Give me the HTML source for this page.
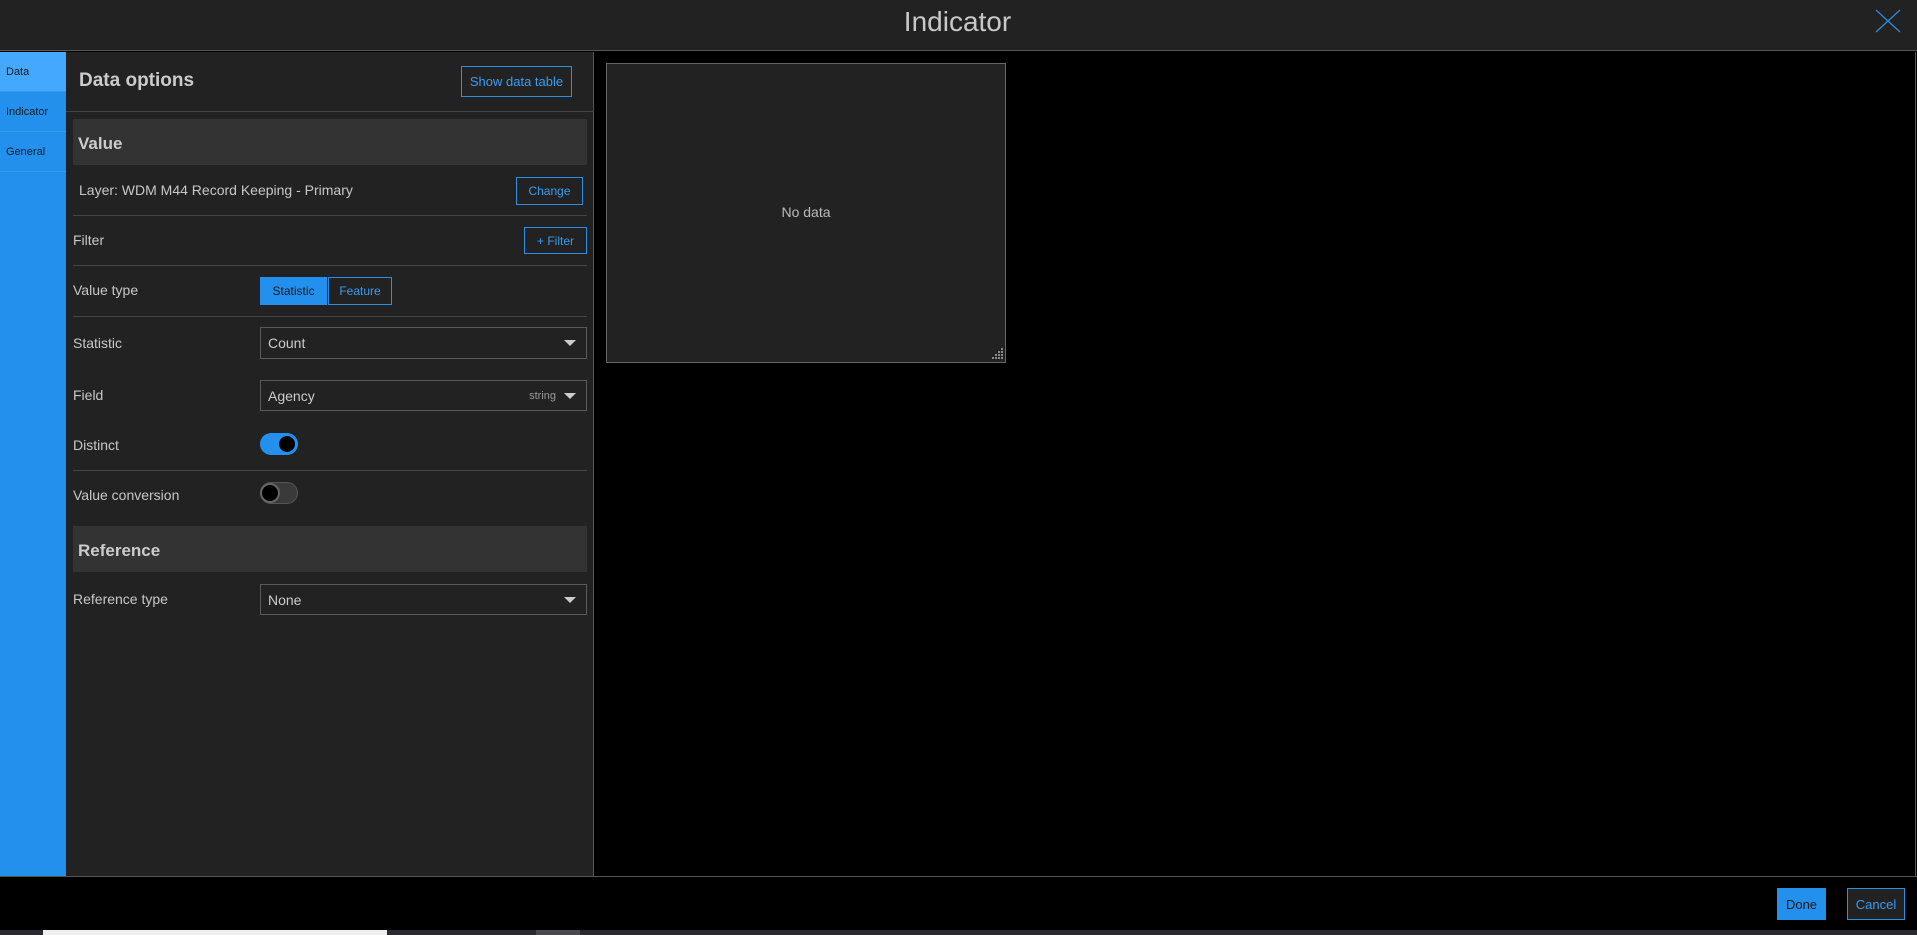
<!DOCTYPE html><html><head><style>
*{box-sizing:border-box;margin:0;padding:0}
body{width:1917px;height:935px;background:#000;font-family:"Liberation Sans",sans-serif;position:relative;overflow:hidden;color:#d0d0d0}
.a{position:absolute}
.lbl{position:absolute;left:73px;font-size:14px;color:#c8c8c8}
.sep{position:absolute;left:73px;width:514px;height:1px;background:#444}
.btn{position:absolute;border:1px solid #2b8fe6;color:#3a9cf0;font-size:12px;display:flex;align-items:center;justify-content:center}
.sel{position:absolute;left:260px;width:327px;border:1px solid #5a5a5a;font-size:14px;color:#ccc;padding-left:7px;display:flex;align-items:center}
.tri{position:absolute;right:10px;top:50%;margin-top:-3px;border-left:6px solid transparent;border-right:6px solid transparent;border-top:6px solid #ccc}
.hd{position:absolute;left:73px;width:514px;height:46px;background:#333;font-size:17px;font-weight:bold;color:#ccc;padding-left:5px;padding-top:3px;display:flex;align-items:center}
</style></head><body>
<div class="a" style="left:0;top:0;width:1917px;height:51px;background:#222;border-bottom:1px solid #555"></div>
<div class="a" style="left:0;top:6px;width:1917px;text-align:center;font-size:28px;color:#c8c8c8;font-weight:300;padding-right:2px">Indicator</div>
<svg class="a" style="left:1875px;top:9px" width="26" height="24"><path d="M1 1L25 23M25 1L1 23" stroke="#2b8fe6" stroke-width="1.2" fill="none"/></svg>
<div class="a" style="left:0;top:52px;width:66px;height:825px;background:#2490ee"></div>
<div class="a" style="left:0;top:52px;width:66px;height:40px;background:#45a8ff;border-bottom:1px solid #3a9ae8"></div>
<div class="a" style="left:0;top:92px;width:66px;height:40px;border-bottom:1px solid #3a9ae8"></div>
<div class="a" style="left:0;top:132px;width:66px;height:40px;border-bottom:1px solid #3a9ae8"></div>
<div class="a" style="left:6px;top:66px;font-size:11px;color:#1a1a1a">Data</div>
<div class="a" style="left:6px;top:106px;font-size:11px;color:#1a1a1a">Indicator</div>
<div class="a" style="left:6px;top:146px;font-size:11px;color:#1a1a1a">General</div>
<div class="a" style="left:66px;top:52px;width:528px;height:825px;background:#222;border-right:1px solid #555"></div>
<div class="a" style="left:79px;top:70px;font-size:19px;font-weight:bold;color:#ccc">Data options</div>
<div class="btn" style="left:461px;top:66px;width:111px;height:31px;font-size:13px">Show data table</div>
<div class="a" style="left:66px;top:111px;width:528px;height:1px;background:#444"></div>
<div class="hd" style="top:119px">Value</div>
<div class="a" style="left:79px;top:182px;font-size:14px;color:#c8c8c8">Layer: WDM M44 Record Keeping - Primary</div>
<div class="btn" style="left:516px;top:177px;width:67px;height:28px">Change</div>
<div class="sep" style="top:215px"></div>
<div class="lbl" style="top:232px">Filter</div>
<div class="btn" style="left:524px;top:227px;width:63px;height:27px">+ Filter</div>
<div class="sep" style="top:265px"></div>
<div class="lbl" style="top:282px">Value type</div>
<div class="a" style="left:260px;top:277px;width:67px;height:28px;background:#2490ee;color:#1a1a1a;font-size:12px;display:flex;align-items:center;justify-content:center">Statistic</div>
<div class="btn" style="left:328px;top:277px;width:64px;height:28px">Feature</div>
<div class="sep" style="top:316px"></div>
<div class="lbl" style="top:335px">Statistic</div>
<div class="sel" style="top:327px;height:32px">Count<div class="tri"></div></div>
<div class="lbl" style="top:387px">Field</div>
<div class="sel" style="top:380px;height:31px">Agency<span style="position:absolute;right:30px;font-size:11px;color:#999">string</span><div class="tri"></div></div>
<div class="lbl" style="top:437px">Distinct</div>
<div class="a" style="left:260px;top:433px;width:38px;height:22px;border-radius:11px;background:#2490ee"></div>
<div class="a" style="left:277px;top:434px;width:20px;height:20px;border-radius:50%;background:#000;border:2px solid #2490ee"></div>
<div class="sep" style="top:470px"></div>
<div class="lbl" style="top:487px">Value conversion</div>
<div class="a" style="left:260px;top:482px;width:38px;height:22px;border-radius:11px;background:#3a3a3a;border:1px solid #555"></div>
<div class="a" style="left:260px;top:483px;width:20px;height:20px;border-radius:50%;background:#000;border:2px solid #666"></div>
<div class="hd" style="top:526px">Reference</div>
<div class="lbl" style="top:591px">Reference type</div>
<div class="sel" style="top:584px;height:31px">None<div class="tri"></div></div>
<div class="a" style="left:0;top:876px;width:1917px;height:1px;background:#555"></div>
<div class="a" style="left:1915px;top:52px;width:1px;height:825px;background:#555"></div>
<div class="a" style="left:606px;top:63px;width:400px;height:300px;background:#222;border:1px solid #666"></div>
<div class="a" style="left:606px;top:204px;width:400px;text-align:center;font-size:14px;color:#bbb">No data</div>
<svg class="a" style="left:992px;top:348px" width="12" height="12" fill="#888"><rect x="9" y="0" width="2" height="2"/><rect x="6" y="3" width="2" height="2"/><rect x="9" y="3" width="2" height="2"/><rect x="3" y="6" width="2" height="2"/><rect x="6" y="6" width="2" height="2"/><rect x="9" y="6" width="2" height="2"/><rect x="0" y="9" width="2" height="2"/><rect x="3" y="9" width="2" height="2"/><rect x="6" y="9" width="2" height="2"/><rect x="9" y="9" width="2" height="2"/></svg>
<div class="a" style="left:1777px;top:888px;width:49px;height:32px;background:#2490ee;color:#1a1a1a;font-size:13px;display:flex;align-items:center;justify-content:center">Done</div>
<div class="btn" style="left:1847px;top:888px;width:58px;height:32px;background:#222;font-size:13px">Cancel</div>
<div class="a" style="left:0;top:930px;width:1917px;height:5px;background:#2a2a2e"></div>
<div class="a" style="left:43px;top:930px;width:344px;height:5px;background:#eee"></div>
<div class="a" style="left:536px;top:930px;width:44px;height:5px;background:#4a4a4e"></div>
</body></html>
